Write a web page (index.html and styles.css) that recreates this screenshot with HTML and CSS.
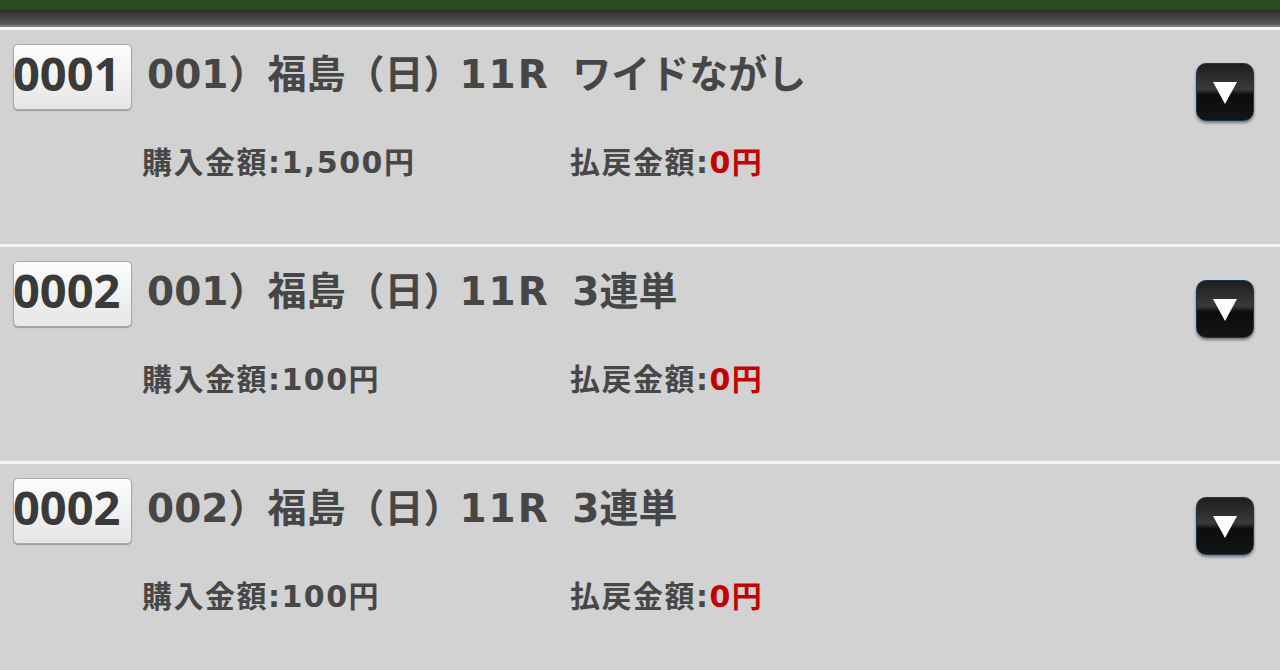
FILE: index.html
```html
<!DOCTYPE html>
<html lang="ja">
<head>
    <meta charset="UTF-8">
    <title>購入履歴</title>
    <link rel="stylesheet" href="styles.css">
</head>
<body>
    <div class="topbar"></div>
    <div class="shade"></div>

    <div class="list">
        <div class="row">
            <div class="head">
                <span class="num">0001</span>
                <span class="title">001）福島（日）<span class="race">11R</span> ワイドながし</span>
                <span class="open"></span>
            </div>
            <div class="money">
                <span class="buy">購入金額:1,500円</span>
                <span class="pay">払戻金額:<em>0円</em></span>
            </div>
        </div>

        <div class="row">
            <div class="head">
                <span class="num">0002</span>
                <span class="title">001）福島（日）<span class="race">11R</span> 3連単</span>
                <span class="open"></span>
            </div>
            <div class="money">
                <span class="buy">購入金額:100円</span>
                <span class="pay">払戻金額:<em>0円</em></span>
            </div>
        </div>

        <div class="row">
            <div class="head">
                <span class="num">0002</span>
                <span class="title">002）福島（日）<span class="race">11R</span> 3連単</span>
                <span class="open"></span>
            </div>
            <div class="money">
                <span class="buy">購入金額:100円</span>
                <span class="pay">払戻金額:<em>0円</em></span>
            </div>
        </div>
    </div>
</body>
</html>
```

FILE: styles.css
```css
html{
    background: #d2d2d2;
}

body{
    margin: 0;
    height: 670px;
    overflow: hidden;
    font-family: "DejaVu Sans", "Noto Sans CJK JP", sans-serif;
    font-weight: bold;
    color: #444;
}

.topbar{
    height: 10px;
    background: #2c4a1f;
}

.shade{
    height: 17px;
    background: linear-gradient(#2e2e2e, #555 80%, #8a8a8a);
}

.row{
    height: 214px;
    border-top: 3px solid #f4f4f4;
    padding-left: 13px;
}

.head{
    display: flex;
    align-items: flex-start;
    padding-top: 14px;
}

.num{
    width: 117px;
    height: 64px;
    margin-right: 15px;
    border: 1px solid #a8a8a8;
    border-radius: 5px;
    background: linear-gradient(#fdfdfd, #e6e6e6);
    box-shadow: 0 1px 1px #999;
    font-family: "Open Sans", sans-serif;
    font-weight: 700;
    font-size: 47px;
    line-height: 56px;
    letter-spacing: 0;
    text-indent: -1px;
    color: #3a3a3a;
    white-space: nowrap;
    overflow: visible;
}

.title{
    flex: 1;
    font-size: 39px;
    line-height: 62px;
    word-spacing: 9px;
    color: #464646;
}

.race{
    margin-left: -3px;
    letter-spacing: 2px;
}

.open{
    position: relative;
    width: 56px;
    height: 56px;
    margin: 19px 26px 0 0;
    border: 1px solid #1d3550;
    border-radius: 10px;
    background: linear-gradient(#1e1e1e, #3a3a3a 45%, #0c0c0c 55%, #151515);
    box-shadow: 0 2px 3px rgba(0,0,0,.45);
}

/* white down arrow */
.open::after{
    content: "";
    position: absolute;
    left: 16px;
    top: 18px;
    border-left: 12px solid transparent;
    border-right: 12px solid transparent;
    border-top: 22px solid #fff;
}

.money{
    display: flex;
    padding-left: 129px;
    margin-top: 24px;
    font-size: 30px;
    line-height: 36px;
    letter-spacing: 1.5px;
    color: #474747;
}

.buy{
    width: 428px;
}

.pay em{
    font-style: normal;
    color: #c40000;
}
```
